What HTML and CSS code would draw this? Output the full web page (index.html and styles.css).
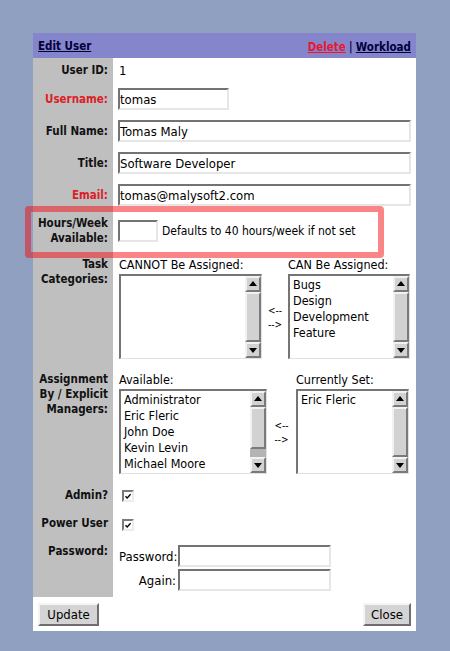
FILE: index.html
```html
<!DOCTYPE html>
<html>
<head>
<meta charset="utf-8">
<title>Edit User</title>
<link rel="stylesheet" href="styles.css">
</head>
<body>
<div class="panel">
  <div class="header">
    <a class="hlink" href="#">Edit User</a>
    <div class="actions"><a class="hlink danger" href="#">Delete</a><span class="sep">|</span><a class="hlink" href="#">Workload</a></div>
  </div>

  <div class="form">
    <div class="label r-id">User ID:</div>
    <div class="value r-id plain">1</div>

    <div class="label req">Username:</div>
    <div class="value r-in"><input class="field f-user" type="text" value="tomas"></div>

    <div class="label">Full Name:</div>
    <div class="value r-in"><input class="field f-wide" type="text" value="Tomas Maly"></div>

    <div class="label">Title:</div>
    <div class="value r-in"><input class="field f-wide" type="text" value="Software Developer"></div>

    <div class="label req">Email:</div>
    <div class="value r-in"><input class="field f-wide" type="text" value="tomas@malysoft2.com"></div>

    <div class="label r-hours">Hours/Week<br>Available:</div>
    <div class="value r-hours hours">
      <input class="field f-hours" type="text" value="">
      <span class="hint">Defaults to 40 hours/week if not set</span>
      <div class="highlight"></div>
    </div>

    <div class="label top">Task<br>Categories:</div>
    <div class="value tall">
      <div class="pick pick-task">
        <div class="cap">CANNOT Be Assigned:</div>
        <div class="cap c3">CAN Be Assigned:</div>
        <div class="listbox lb1">
          <div class="items"></div>
          <div class="sb"><div class="sbtn up"></div><div class="thumb full"></div><div class="sbtn down"></div></div>
        </div>
        <div class="arrows">&lt;--<br>--&gt;</div>
        <div class="listbox lb2">
          <div class="items"><div>Bugs</div><div>Design</div><div>Development</div><div>Feature</div></div>
          <div class="sb"><div class="sbtn up"></div><div class="thumb full"></div><div class="sbtn down"></div></div>
        </div>
      </div>
    </div>

    <div class="label top">Assignment<br>By / Explicit<br>Managers:</div>
    <div class="value tall">
      <div class="pick pick-mgr">
        <div class="cap">Available:</div>
        <div class="cap c3">Currently Set:</div>
        <div class="listbox lb3">
          <div class="items"><div>Administrator</div><div>Eric Fleric</div><div>John Doe</div><div>Kevin Levin</div><div>Michael Moore</div></div>
          <div class="sb"><div class="sbtn up"></div><div class="trough"><div class="thumb part"></div></div><div class="sbtn down"></div></div>
        </div>
        <div class="arrows">&lt;--<br>--&gt;</div>
        <div class="listbox lb4">
          <div class="items"><div>Eric Fleric</div></div>
          <div class="sb"><div class="sbtn up"></div><div class="thumb full"></div><div class="sbtn down"></div></div>
        </div>
      </div>
    </div>

    <div class="label r-admin">Admin?</div>
    <div class="value r-admin chk-row"><span class="chk"><svg viewBox="0 0 8 8" width="8" height="8"><path d="M1.5 4.2 L3.2 6 L6.6 2.2" fill="none" stroke="#000" stroke-width="1.3"/></svg></span></div>

    <div class="label r-power">Power User</div>
    <div class="value r-power chk-row"><span class="chk"><svg viewBox="0 0 8 8" width="8" height="8"><path d="M1.5 4.2 L3.2 6 L6.6 2.2" fill="none" stroke="#000" stroke-width="1.3"/></svg></span></div>

    <div class="label top">Password:</div>
    <div class="value r-pass">
      <div class="pwgrid">
        <span class="pwlabel">Password:</span><input class="field f-pw" type="password" value="">
        <span class="pwlabel">Again:</span><input class="field f-pw" type="password" value="">
      </div>
    </div>
  </div>

  <div class="buttons">
    <button class="btn b-update" type="button">Update</button>
    <button class="btn b-close" type="button">Close</button>
  </div>
</div>
</body>
</html>
```

FILE: styles.css
```css
html, body {
  margin: 0;
  padding: 0;
}
body {
  background: #8fa0c1;
  font-family: "DejaVu Sans", "Liberation Sans", sans-serif;
  color: #000;
}
.panel {
  width: 383px;
  margin: 33px 0 0 33px;
  background: #fff;
}
.header {
  height: 25px;
  background: #8585cc;
  display: flex;
  justify-content: space-between;
  align-items: center;
  padding: 0 5px;
  box-sizing: border-box;
}
.hlink {
  font-family: "DejaVu Sans Condensed", "DejaVu Sans", sans-serif;
  font-stretch: condensed;
  font-weight: bold;
  font-size: 11.5px;
  color: #00003a;
  text-decoration: underline;
}
.hlink.danger {
  color: #e8192c;
}
.sep {
  font-size: 12px;
  color: #00003a;
  margin: 0 3px;
}
.form {
  display: grid;
  grid-template-columns: 80px 1fr;
}
.label {
  background: #bfbfbf;
  font-family: "DejaVu Sans Condensed", "DejaVu Sans", sans-serif;
  font-stretch: condensed;
  font-weight: bold;
  font-size: 11.5px;
  line-height: 15px;
  text-align: right;
  padding-right: 5px;
  display: flex;
  flex-direction: column;
  justify-content: center;
  align-items: flex-end;
  color: #111;
}
.label.req {
  color: #dc1e28;
}
.label.top {
  justify-content: flex-start;
  padding-top: 6px;
}
.value {
  padding: 5px 5px 5px 5px;
  display: flex;
  align-items: center;
  font-family: "DejaVu Sans Condensed", "DejaVu Sans", sans-serif;
  font-stretch: condensed;
  font-size: 13px;
}
.value.r-id {
  height: 25px;
  padding: 0 5px 0 6px;
  box-sizing: border-box;
}
.value.r-hours {
  padding: 9px 5px;
  position: relative;
}
.value.tall {
  padding: 6px 5px 7px 6px;
  align-items: flex-start;
}
.value.r-admin {
  padding: 9px 5px 7px 9px;
}
.value.r-power {
  padding: 10px 5px 7px 9px;
}
.value.r-pass {
  padding: 7px 5px 6px 6px;
}
.field {
  box-sizing: border-box;
  height: 22px;
  border: 2px solid;
  border-color: #737373 #e6e6e6 #e6e6e6 #737373;
  padding: 0;
  margin: 0;
  background: #fff;
  font-family: "DejaVu Sans Condensed", "DejaVu Sans", sans-serif;
  font-stretch: condensed;
  font-size: 13px;
  color: #000;
  outline: none;
}
.f-user { width: 111px; }
.f-wide { width: 100%; }
.f-hours { width: 40px; }
.f-pw { width: 153px; }
.hint {
  margin-left: 4px;
  font-size: 12px;
}
.highlight {
  position: absolute;
  left: -88px;
  top: -5px;
  width: 359px;
  height: 52px;
  box-sizing: border-box;
  border: 6px solid rgba(245, 12, 18, 0.5);
  border-radius: 4px;
  pointer-events: none;
}
.pick {
  display: grid;
  grid-template-rows: 16px 85px;
  row-gap: 1px;
}
.pick-task {
  grid-template-columns: 143px 26px 122px;
}
.pick-mgr {
  grid-template-columns: 148px 29px 113px;
}
.cap {
  font-size: 12.5px;
  line-height: 16px;
  grid-row: 1;
  grid-column: 1;
  white-space: nowrap;
}
.cap.c3 {
  grid-column: 3;
}
.arrows {
  grid-row: 2;
  grid-column: 2;
  align-self: center;
  text-align: center;
  font-size: 10px;
  line-height: 14px;
  padding-top: 3px;
}
.listbox {
  grid-row: 2;
  display: flex;
  box-sizing: border-box;
  height: 85px;
  border-style: solid;
  border-width: 2px 1px 1px 2px;
  border-color: #757575 #e2e2e2 #e2e2e2 #757575;
  background: #fff;
}
.lb1, .lb3 { grid-column: 1; }
.lb2, .lb4 { grid-column: 3; }
.items {
  flex: 1;
  padding: 1px 0 0 3px;
  font-size: 12.5px;
  line-height: 16px;
  white-space: nowrap;
  overflow: hidden;
}
.sb {
  width: 16px;
  display: flex;
  flex-direction: column;
  background: #b8b8b8;
}
.sbtn {
  height: 16px;
  box-sizing: border-box;
  border: 2px solid;
  border-color: #f2f2f2 #7a7a7a #7a7a7a #f2f2f2;
  background: #d2d2d2;
  position: relative;
}
.sbtn::after {
  content: "";
  position: absolute;
  left: 2px;
  width: 0;
  height: 0;
  border-left: 4px solid transparent;
  border-right: 4px solid transparent;
}
.sbtn.up::after {
  top: 3px;
  border-bottom: 5px solid #000;
}
.sbtn.down::after {
  top: 4px;
  border-top: 5px solid #000;
}
.thumb {
  box-sizing: border-box;
  border: 2px solid;
  border-color: #f2f2f2 #7a7a7a #7a7a7a #f2f2f2;
  background: #d2d2d2;
}
.thumb.full {
  flex: 1;
}
.trough {
  flex: 1;
  display: flex;
  flex-direction: column;
  background: #b4b4b4;
}
.thumb.part {
  height: 42px;
}
.chk {
  width: 12px;
  height: 12px;
  box-sizing: border-box;
  border: 2px solid;
  border-color: #7a7a7a #ececec #ececec #7a7a7a;
  background: #fff;
  display: flex;
  align-items: center;
  justify-content: center;
}
.chk svg {
  display: block;
}
.pwgrid {
  display: grid;
  grid-template-columns: 57px 153px;
  row-gap: 2px;
  column-gap: 2px;
  align-items: center;
}
.pwlabel {
  text-align: right;
  font-size: 13px;
}
.buttons {
  display: flex;
  justify-content: space-between;
  padding: 6px 5px 5px 5px;
}
.btn {
  height: 23px;
  box-sizing: border-box;
  border: 2px solid;
  border-color: #f4f4f4 #6e6e6e #6e6e6e #f4f4f4;
  background: #d4d4d4;
  padding: 0;
  margin: 0;
  font-family: "DejaVu Sans Condensed", "DejaVu Sans", sans-serif;
  font-stretch: condensed;
  font-size: 13px;
  color: #000;
}
.b-update { width: 61px; }
.b-close { width: 48px; }
```
